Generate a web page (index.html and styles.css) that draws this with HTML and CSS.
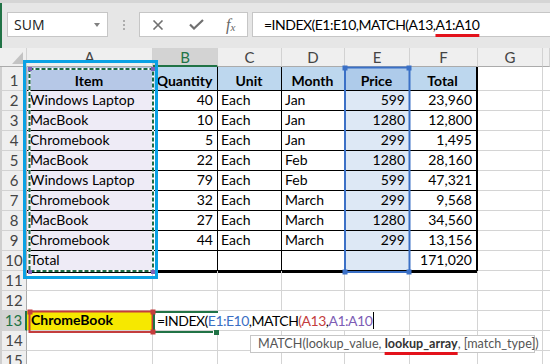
FILE: index.html
```html
<!DOCTYPE html>
<html lang="en">
<head>
    <meta charset="UTF-8">
    <title>INDEX MATCH</title>
    <link rel="stylesheet" href="styles.css">
</head>
<body>
<div class="app">
    <div class="ribbon-edge"></div>
    <div class="fbar">
        <div class="namebox">
            <span>SUM</span>
            <i class="dd"></i>
        </div>
        <div class="grip"><i></i><i></i><i></i></div>
        <div class="fbtns">
            <svg class="bx" width="12" height="10" viewBox="0 0 12 10"><path d="M1.5 0.5 L10.5 9.5 M10.5 0.5 L1.5 9.5" stroke="#707070" stroke-width="1.6" fill="none"/></svg>
            <svg class="bc" width="15" height="11" viewBox="0 0 15 11"><path d="M1 5.5 L5 9.5 L14 1" stroke="#707070" stroke-width="2.2" fill="none"/></svg>
            <span class="fx">f<sub>x</sub></span>
        </div>
        <div class="finput">=INDEX(E1:E10,MATCH(A13,<span class="mark">A1:A10</span></div>
    </div>

    <div class="sheet">
        <div class="hd corner"><i class="tri"></i></div>
        <div class="hd">A</div><div class="hd sel">B</div><div class="hd">C</div><div class="hd">D</div><div class="hd">E</div><div class="hd">F</div><div class="hd">G</div><div class="hd"></div>

        <div class="rh">1</div>
        <div class="c t th ca">Item</div><div class="c t th">Quantity</div><div class="c t th">Unit</div><div class="c t th">Month</div><div class="c t th ce">Price</div><div class="c t th cf">Total</div><div class="c"></div><div class="c"></div>

        <div class="rh">2</div>
        <div class="c t ca">Windows Laptop</div><div class="c t num">40</div><div class="c t">Each</div><div class="c t">Jan</div><div class="c t num ce">599</div><div class="c t num cf">23,960</div><div class="c"></div><div class="c"></div>

        <div class="rh">3</div>
        <div class="c t ca">MacBook</div><div class="c t num">10</div><div class="c t">Each</div><div class="c t">Jan</div><div class="c t num ce">1280</div><div class="c t num cf">12,800</div><div class="c"></div><div class="c"></div>

        <div class="rh">4</div>
        <div class="c t ca">Chromebook</div><div class="c t num">5</div><div class="c t">Each</div><div class="c t">Jan</div><div class="c t num ce">299</div><div class="c t num cf">1,495</div><div class="c"></div><div class="c"></div>

        <div class="rh">5</div>
        <div class="c t ca">MacBook</div><div class="c t num">22</div><div class="c t">Each</div><div class="c t">Feb</div><div class="c t num ce">1280</div><div class="c t num cf">28,160</div><div class="c"></div><div class="c"></div>

        <div class="rh">6</div>
        <div class="c t ca">Windows Laptop</div><div class="c t num">79</div><div class="c t">Each</div><div class="c t">Feb</div><div class="c t num ce">599</div><div class="c t num cf">47,321</div><div class="c"></div><div class="c"></div>

        <div class="rh">7</div>
        <div class="c t ca">Chromebook</div><div class="c t num">32</div><div class="c t">Each</div><div class="c t">March</div><div class="c t num ce">299</div><div class="c t num cf">9,568</div><div class="c"></div><div class="c"></div>

        <div class="rh">8</div>
        <div class="c t ca">MacBook</div><div class="c t num">27</div><div class="c t">Each</div><div class="c t">March</div><div class="c t num ce">1280</div><div class="c t num cf">34,560</div><div class="c"></div><div class="c"></div>

        <div class="rh">9</div>
        <div class="c t ca">Chromebook</div><div class="c t num">44</div><div class="c t">Each</div><div class="c t">March</div><div class="c t num ce">299</div><div class="c t num cf">13,156</div><div class="c"></div><div class="c"></div>

        <div class="rh">10</div>
        <div class="c t last ca">Total</div><div class="c t last"></div><div class="c t last"></div><div class="c t last"></div><div class="c t last ce"></div><div class="c t last num cf">171,020</div><div class="c"></div><div class="c"></div>

        <div class="rh">11</div>
        <div class="c"></div><div class="c"></div><div class="c"></div><div class="c"></div><div class="c"></div><div class="c"></div><div class="c"></div><div class="c"></div>

        <div class="rh">12</div>
        <div class="c"></div><div class="c"></div><div class="c"></div><div class="c"></div><div class="c"></div><div class="c"></div><div class="c"></div><div class="c"></div>

        <div class="rh sel">13</div>
        <div class="c hi">ChromeBook</div>
        <div class="c edit">=INDEX(<span class="r-blue">E1:E10</span>,MATCH<span class="r-red">(A13</span>,<span class="r-purple">A1:A10</span><i class="cursor"></i></div>
        <div class="c"></div><div class="c"></div><div class="c"></div>

        <div class="rh">14</div>
        <div class="c"></div><div class="c"></div><div class="c"></div><div class="c"></div><div class="c"></div><div class="c"></div><div class="c"></div><div class="c"></div>

        <div class="rh">15</div>
        <div class="c"></div><div class="c"></div><div class="c"></div><div class="c"></div><div class="c"></div><div class="c"></div><div class="c"></div><div class="c"></div>
    </div>

    <!-- reference highlights and the callout box drawn over the grid -->
    <svg class="marks" width="550" height="364" viewBox="0 0 550 364">
        <rect x="345" y="67.5" width="64.5" height="204.5" fill="none" stroke="#3b70c6" stroke-width="2"/>
        <rect x="342.5" y="65.5" width="5" height="5" fill="#3b70c6"/>
        <rect x="406.5" y="65.5" width="5" height="5" fill="#3b70c6"/>
        <rect x="342.5" y="269.5" width="5" height="5" fill="#3b70c6"/>
        <rect x="406.5" y="269.5" width="5" height="5" fill="#3b70c6"/>

        <rect x="29.5" y="69" width="123.5" height="202" fill="none" stroke="#fff" stroke-width="2"/>
        <rect x="29.5" y="69" width="123.5" height="202" fill="none" stroke="#1d6b44" stroke-width="2" stroke-dasharray="4 2"/>
        <rect x="28" y="67" width="4" height="4" fill="#8062b8"/>
        <rect x="151" y="67" width="4" height="4" fill="#8062b8"/>
        <rect x="28" y="270" width="4" height="4" fill="#8062b8"/>
        <rect x="151" y="270" width="4" height="4" fill="#8062b8"/>

        <rect x="29.5" y="311.5" width="123" height="20.5" fill="none" stroke="#c43d3d" stroke-width="2"/>
        <path d="M155 312 H218 M154 311 V333 M155 332 H213" stroke="#217346" stroke-width="2" fill="none"/>
        <rect x="27.5" y="309.5" width="5" height="5" fill="#c43d3d"/>
        <rect x="150.5" y="309.5" width="5" height="5" fill="#c43d3d"/>
        <rect x="150.5" y="329.5" width="5" height="5" fill="#c43d3d"/>
        <rect x="214" y="330" width="5" height="5" fill="#217346"/>

        <rect x="24.5" y="61.5" width="132" height="216" fill="none" stroke="#0aa1e4" stroke-width="3"/>
    </svg>

    <div class="tip">MATCH(lookup_value, <b class="mark">lookup_array</b>, [match_type])</div>
</div>
</body>
</html>
```

FILE: styles.css
```css
* {
    box-sizing: border-box;
}
body {
    margin: 0;
    background: #fff;
    font-family: Lato, "Liberation Sans", sans-serif;
    color: #000;
}
.app {
    position: relative;
    width: 550px;
    height: 364px;
    overflow: hidden;
}
.ribbon-edge {
    height: 3px;
    background: #d5d5d5;
}

/* formula bar */
.fbar {
    height: 45px;
    background: #e6e6e6;
    border-left: 2px solid #217346;
    display: flex;
    align-items: flex-start;
    padding-top: 9px;
}
.namebox {
    margin-left: 5px;
    width: 101px;
    height: 25px;
    background: #fff;
    border: 1px solid #c6c6c6;
    display: flex;
    align-items: center;
    justify-content: space-between;
    padding: 0 7px 0 6px;
    font: 14px "Open Sans", sans-serif;
    color: #222;
}
.dd {
    width: 0;
    height: 0;
    border-left: 3.5px solid transparent;
    border-right: 3.5px solid transparent;
    border-top: 4px solid #808080;
}
.grip {
    width: 31px;
    height: 25px;
    display: flex;
    flex-direction: column;
    align-items: center;
    justify-content: center;
    gap: 2px;
}
.grip i {
    width: 2px;
    height: 2px;
    background: #adadad;
}
.fbtns {
    width: 109px;
    height: 25px;
    background: #fff;
    border: 1px solid #c6c6c6;
    display: flex;
    align-items: center;
    padding-left: 12px;
}
.bc {
    margin-left: 25px;
}
.fx {
    margin-left: 22px;
    font: italic 16px "Liberation Serif", serif;
    color: #666;
    line-height: 1;
}
.fx sub {
    font-size: 11px;
    vertical-align: -1px;
}
.finput {
    flex: 1;
    margin-left: 4px;
    height: 25px;
    background: #fff;
    border: 1px solid #c6c6c6;
    border-right: none;
    padding-left: 11px;
    font-size: 14px;
    letter-spacing: -0.5px;
    line-height: 23px;
    white-space: nowrap;
}
.mark {
    text-decoration: underline 3px #e3121b;
    text-underline-offset: 4px;
}

/* grid */
.sheet {
    display: grid;
    grid-template-columns: 27px 126px 65px 64px 63px 65px 68px 65px 7px;
    grid-template-rows: 19px 24px repeat(14, 20px);
    font-size: 14px;
    line-height: 18px;
}
.hd, .rh {
    background: #efefef;
    color: #444;
    font-size: 15px;
    display: flex;
    align-items: center;
    justify-content: center;
    border-right: 1px solid #d2d2d2;
    border-bottom: 1px solid #ababab;
}
.rh {
    border-right-color: #ababab;
    border-bottom-color: #d2d2d2;
    border-left: 2px solid #cfcfcf;
    align-items: flex-end;
    padding-bottom: 1px;
}
.hd.sel {
    background: #d3d3d3;
    color: #217346;
    border-bottom: 2px solid #217346;
}
.rh.sel {
    background: #d3d3d3;
    color: #217346;
    border-right: 2px solid #217346;
}
.corner {
    justify-content: flex-end;
    align-items: flex-end;
    padding: 0 3px 2px 0;
}
.tri {
    width: 0;
    height: 0;
    border-left: 11px solid transparent;
    border-bottom: 12px solid #c3c3c3;
}
.c {
    display: flex;
    align-items: flex-end;
    padding: 0 4px 1px 3px;
    white-space: nowrap;
    border-right: 1px solid #d4d4d4;
    border-bottom: 1px solid #d4d4d4;
}
.t {
    border-color: #000;
}
.th {
    background: #bdd7ee;
    font-weight: bold;
    justify-content: center;
    padding-bottom: 0;
}
.num {
    justify-content: flex-end;
}
.ca {
    background: #eeebf6;
}
.th.ca {
    background: #b6c8e7;
}
.ce {
    background: #dde8f5;
}
.th.ce {
    background: #aecbea;
}
.cf {
    border-right-width: 2px;
}
.last {
    box-shadow: 0 2px 0 #000;
}
.hi {
    background: #f6e800;
    font-weight: bold;
    padding-left: 4px;
}
.edit {
    grid-column: span 4;
    padding-left: 4px;
    align-items: center;
    padding-bottom: 0;
    letter-spacing: -0.5px;
}
.r-blue {
    color: #3b6fc4;
}
.r-red {
    color: #c43d3d;
}
.r-purple {
    color: #7d5db5;
}
.cursor {
    width: 1px;
    height: 17px;
    background: #000;
    margin-left: 1px;
}

/* overlays */
.marks {
    position: absolute;
    left: 0;
    top: 0;
    pointer-events: none;
}
.tip {
    position: absolute;
    left: 250px;
    top: 335px;
    width: 285px;
    height: 18px;
    background: #fff;
    border: 1px solid #c6c6c6;
    padding-left: 7px;
    font: 12.6px Lato, sans-serif;
    line-height: 16px;
    color: #555;
    white-space: nowrap;
}
.tip b {
    color: #333;
}
```
